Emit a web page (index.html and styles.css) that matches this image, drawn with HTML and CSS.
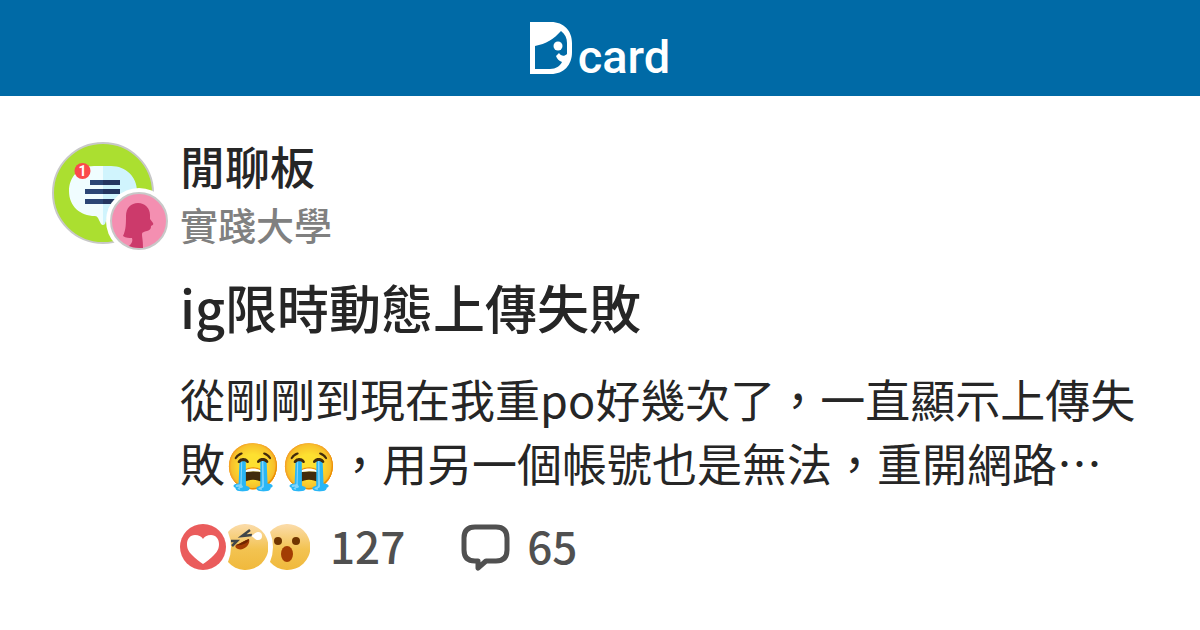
FILE: index.html
```html
<!DOCTYPE html>
<html lang="zh-Hant-TW">
  <head>
    <meta charset="UTF-8" />
    <meta name="viewport" content="width=device-width, initial-scale=1.0" />
    <title>ig限時動態上傳失敗 - 閒聊板 | Dcard</title>
    <link rel="stylesheet" href="styles.css">
  </head>
  <body>
    <header class="header">
      <div class="logo">
        <svg class="logo-mark" viewBox="0 0 42 52" aria-label="D" role="img">
          <path fill="#fff" fill-rule="evenodd" d="M0 0H21C34 0 42 9 42 21V30C42 43 34 52 21 52H0ZM5 24V47H20C26 47 30 44 32 40C29 39 27 37 26 34L29 31C31 34 34 35 37 32V21C37 16 35 12 31 9C24 17 16 22 5 24Z" />
          <circle cx="28" cy="24" r="4.500" fill="#fff" />
        </svg>
        <span class="logo-text">card</span>
      </div>
    </header>
    <main class="post">
      <div class="avatar">
        <svg class="forum-icon" viewBox="0 0 102 102" aria-hidden="true">
          <circle cx="51" cy="51" r="50" fill="#abdf30" stroke="#c8c8c8" stroke-width="2" />
          <path fill="#f0fdff" d="M51 24H42C27 24 17 35 17 49C17 64 28 74 43 74Q45 74 46 76L49 82Q50 83 51 83Z" />
          <path fill="#d0f4fd" d="M51 24H59C74 24 85 35 85 49C85 64 74 74 59 74Q56 74 55 76L53 82Q52 83 51 83Z" />
          <path fill="#2b4675" d="M38 38H51V43H38ZM33 47H51V52H33ZM33 57H51V62H33Z" />
          <path fill="#253660" d="M51 38H68V43H51ZM51 47H68V52H51ZM51 57H68V62H51Z" />
          <circle cx="30.500" cy="29" r="8" fill="#fb4a4b" />
          <text x="30.500" y="34" class="notice">1</text>
        </svg>
        <svg class="gender-icon" viewBox="0 0 66 66" aria-hidden="true">
          <circle cx="33" cy="33" r="33" fill="#fff" />
          <circle cx="33" cy="33" r="28" fill="#f48fb1" stroke="#c8c8c8" stroke-width="2" />
          <path fill="#cc3a6b" d="M17 48C20 42 20 35 20 28C20 20 25 15 32 15C39 15 44 20 44 27V31L47 35C48 37 46 37 45 38C45 41 44 42 41 43C38 44 36 44 36 46C36 50 37 51 37 60C32 60 28 60 23 58C26 55 27 53 26 50C23 50 20 50 17 48Z" />
        </svg>
      </div>
      <article class="content">
        <p class="forum">閒聊板</p>
        <p class="school">實踐大學</p>
        <h1 class="title">ig限時動態上傳失敗</h1>
        <p class="excerpt">從剛剛到現在我重po好幾次了，一直顯示上傳失敗😭😭，用另一個帳號也是無法，重開網路⋯</p>
        <div class="stats">
          <div class="reactions">
            <svg class="reaction" viewBox="0 0 46 46" aria-hidden="true">
              <circle cx="23" cy="23" r="23" fill="#ea5c5c" />
              <path fill="#fff" d="M23 40C20 38 15 34 12 31C8 27 7 24 7 20C7 15 10 11 15 11C19 11 22 13 23 15C24 13 27 11 31 11C36 11 39 15 39 20C39 24 38 27 34 31C31 34 26 38 23 40Z" />
            </svg>
            <svg class="reaction" viewBox="0 0 46 46" aria-hidden="true">
              <defs>
                <linearGradient id="face" x1="0" y1="0" x2="0" y2="1">
                  <stop offset="0" stop-color="#fbdcab" />
                  <stop offset=".55" stop-color="#f3c351" />
                  <stop offset="1" stop-color="#f0b93c" />
                </linearGradient>
              </defs>
              <path fill="url(#face)" d="M6 8A23 23 0 1 1 6 38Q12 23 6 8Z" />
              <path fill="#a33d03" d="M14 21C18 20 23 16 27 15C29 21 21 27 16 25C13 24 13 22 14 21Z" />
              <path fill="#702600" d="M14 21C18 20 23 16 27 15Q27 18 22 20T14 21Z" />
              <path fill="none" stroke="#40464a" stroke-width="2.500" d="M28 6L20 12L30 11M9 17L15 17L10 22" />
              <path fill="#fff" d="M29 12C32 11 33 8 36 8A4 4 0 1 1 36 16C33 16 32 13 29 12Z" />
            </svg>
            <svg class="reaction" viewBox="0 0 46 46" aria-hidden="true">
              <path fill="url(#face)" d="M6 8A23 23 0 1 1 6 38Q12 23 6 8Z" />
              <circle cx="14" cy="17" r="4" fill="#703500" />
              <circle cx="32" cy="17" r="4" fill="#703500" />
              <ellipse cx="23" cy="30" rx="6" ry="8" fill="#a33d03" />
            </svg>
          </div>
          <span class="likes">127</span>
          <svg class="comment-icon" viewBox="0 0 50 48" aria-hidden="true">
            <path fill="none" stroke="#505050" stroke-width="5" stroke-linejoin="round" d="M14 4H35Q46 4 46 15V27Q46 38 35 38H25L17 45V38H14Q3 38 3 27V15Q3 4 14 4Z" />
          </svg>
          <span class="comments">65</span>
        </div>
      </article>
    </main>
  </body>
</html>
```
FILE: styles.css
```css
* {
  margin: 0;
  padding: 0;
  box-sizing: border-box;
}
body {
  background-color: #fff;
  color: #262626;
  font-family: "Noto Sans CJK TC", "Noto Color Emoji", sans-serif;
}
.header {
  height: 96px;
  background-color: #006aa6;
  display: flex;
  align-items: center;
  justify-content: center;
}
.logo {
  display: flex;
  align-items: flex-end;
  gap: 6px;
}
.logo-mark {
  width: 42px;
  height: 52px;
}
.logo-text {
  color: #fff;
  font-family: Roboto, sans-serif;
  font-size: 47px;
  font-weight: 500;
  line-height: 34px;
}
.post {
  display: flex;
  padding: 42px 52px;
  gap: 26px;
}
.avatar {
  position: relative;
  flex: none;
  width: 102px;
  height: 102px;
  margin-top: 4px;
}
.forum-icon {
  display: block;
  width: 102px;
}
.notice {
  fill: #fff;
  font-family: Roboto, sans-serif;
  font-size: 14px;
  font-weight: 700;
  text-anchor: middle;
}
.gender-icon {
  position: absolute;
  width: 66px;
  right: -18px;
  bottom: -10px;
}
.content {
  flex: 1;
  min-width: 0;
}
.forum {
  font-size: 45px;
  font-weight: 500;
  line-height: 56px;
}
.school {
  color: #808080;
  font-size: 38px;
  font-weight: 500;
  line-height: 60px;
}
.title {
  margin-top: 21px;
  font-size: 52px;
  font-weight: 500;
  line-height: 64px;
}
.excerpt {
  margin-top: 28px;
  font-size: 45px;
  line-height: 64px;
}
.stats {
  display: flex;
  align-items: center;
  margin-top: 22px;
  color: #505050;
  font-size: 44px;
  font-weight: 500;
  line-height: 56px;
}
.reactions {
  display: flex;
  margin-right: 20px;
}
.reaction {
  width: 46px;
  height: 46px;
}
.reaction + .reaction {
  margin-left: -4px;
}
.likes,
.comments {
  padding-bottom: 4px;
}
.likes {
  margin-right: 56px;
}
.comment-icon {
  width: 50px;
  height: 48px;
  margin-right: 16px;
}
```
